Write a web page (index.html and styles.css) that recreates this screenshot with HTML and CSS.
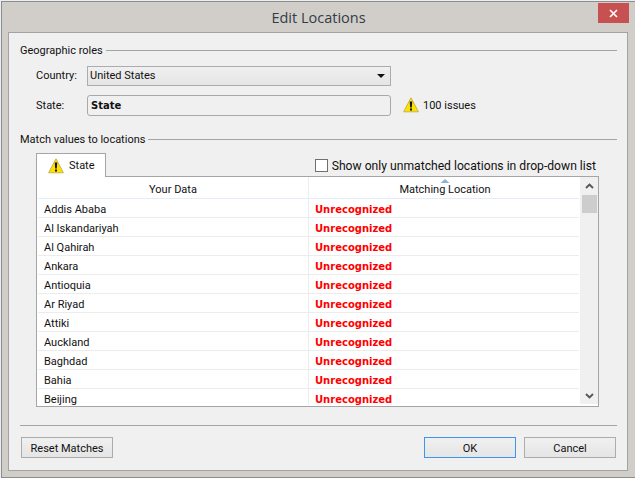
FILE: index.html
```html
<!DOCTYPE html>
<html lang="en">
<head>
<meta charset="utf-8">
<title>Edit Locations</title>
<link rel="stylesheet" href="styles.css">
</head>
<body>
<svg class="defs" width="0" height="0" aria-hidden="true">
  <symbol id="warn" viewBox="0 0 16 16">
    <path d="M8 .8 L15.4 14.8 H.6 Z" fill="#ffe100" stroke="#c9b24a" stroke-width="1" stroke-linejoin="round"/>
    <path d="M6.8 4.5h2.4l-.4 6H7.2Z" fill="#111"/>
    <rect x="7" y="11.5" width="2" height="2" fill="#111"/>
  </symbol>
</svg>
<div class="window">
  <div class="titlebar">
    <span class="title">Edit Locations</span>
    <span class="close"><svg width="9" height="9" viewBox="0 0 9 9"><path d="M1 1l7 7M8 1L1 8" stroke="#fff" stroke-width="1.6"/></svg></span>
  </div>
  <div class="panel">
    <div class="legend legend-first"><span>Geographic roles</span><i></i></div>
    <div class="field field-country">
      <label class="field-label">Country:</label>
      <div class="combo"><span>United States</span><b class="caret"></b></div>
    </div>
    <div class="field field-state">
      <label class="field-label">State:</label>
      <div class="statebox">State</div>
      <svg class="warn-icon"><use href="#warn"/></svg>
      <span class="issues">100 issues</span>
    </div>
    <div class="legend legend-match"><span>Match values to locations</span><i></i></div>
    <div class="tabline">
      <div class="tab"><svg class="warn-icon"><use href="#warn"/></svg><span>State</span></div>
      <label class="check"><span class="box"></span><span>Show only unmatched locations in drop-down list</span></label>
    </div>
    <div class="table">
      <div class="data">
        <div class="head">
          <div class="h1">Your Data</div>
          <div class="h2"><svg class="sort" width="9" height="4" viewBox="0 0 9 4"><path d="M4.5 0L9 4H0Z" fill="#8db4cf"/></svg>Matching Location</div>
        </div>
        <div class="rows">
          <div class="row"><div class="c1">Addis Ababa</div><div class="c2">Unrecognized</div></div>
          <div class="row"><div class="c1">Al Iskandariyah</div><div class="c2">Unrecognized</div></div>
          <div class="row"><div class="c1">Al Qahirah</div><div class="c2">Unrecognized</div></div>
          <div class="row"><div class="c1">Ankara</div><div class="c2">Unrecognized</div></div>
          <div class="row"><div class="c1">Antioquia</div><div class="c2">Unrecognized</div></div>
          <div class="row"><div class="c1">Ar Riyad</div><div class="c2">Unrecognized</div></div>
          <div class="row"><div class="c1">Attiki</div><div class="c2">Unrecognized</div></div>
          <div class="row"><div class="c1">Auckland</div><div class="c2">Unrecognized</div></div>
          <div class="row"><div class="c1">Baghdad</div><div class="c2">Unrecognized</div></div>
          <div class="row"><div class="c1">Bahia</div><div class="c2">Unrecognized</div></div>
          <div class="row"><div class="c1">Beijing</div><div class="c2">Unrecognized</div></div>
        </div>
      </div>
      <div class="scrollbar">
        <svg width="9" height="6" viewBox="0 0 9 6"><path d="M1 5l3.5-3.5L8 5" fill="none" stroke="#555" stroke-width="1.8"/></svg>
        <div class="thumb"></div>
        <div class="spacer"></div>
        <svg width="9" height="6" viewBox="0 0 9 6"><path d="M1 1l3.5 3.5L8 1" fill="none" stroke="#555" stroke-width="1.8"/></svg>
      </div>
    </div>
    <div class="sep"></div>
    <div class="buttons">
      <div class="btn">Reset Matches</div>
      <div class="right">
        <div class="btn btn-default">OK</div>
        <div class="btn">Cancel</div>
      </div>
    </div>
  </div>
</div>
</body>
</html>
```
FILE: styles.css
```css
* { box-sizing: border-box; }
html, body { margin: 0; padding: 0; }
body {
  width: 635px;
  height: 478px;
  overflow: hidden;
  background: #eceff2;
  font-family: Roboto, "Open Sans", sans-serif;
  font-size: 11px;
  color: #111;
}
.defs { position: absolute; }
.window {
  width: 635px;
  height: 477px;
  margin-top: 1px;
  margin-left: 1px;
  border: 1px solid #8c8c8c;
  border-right: 0;
  background: #d1cdc9;
  padding: 0 6px 7px 6px;
}
.titlebar {
  height: 30px;
  display: flex;
  align-items: center;
  justify-content: center;
  position: relative;
  padding-right: 1px;
}
.title { font-family: "Open Sans", sans-serif; font-size: 14.5px; color: #333d47; }
.close {
  position: absolute;
  right: 1px;
  top: 1px;
  width: 31px;
  height: 20px;
  background: #c75050;
  display: flex;
  align-items: center;
  justify-content: center;
}
.panel {
  width: 620px;
  height: 439px;
  border: 1px solid #a3a3a3;
  background: #f0f0f0;
  padding: 0 10px 0 11px;
}
.legend { display: flex; align-items: center; gap: 3px; height: 16px; }
.legend i { flex: 1; height: 1px; background: #a5a5a5; }
.legend-first { margin-top: 9px; }
.legend-match { margin-top: 15px; }
.field { display: flex; align-items: center; padding-left: 16px; }
.field-country { height: 21px; margin-top: 7px; }
.field-state { height: 22px; margin-top: 8px; }
.field-label { width: 51px; }
.combo {
  width: 304px;
  height: 20px;
  border: 1px solid #acacac;
  background: linear-gradient(#f0f0f0, #e5e5e5);
  display: flex;
  align-items: center;
  justify-content: space-between;
  padding: 0 5px 0 2px;
}
.caret {
  width: 0;
  height: 0;
  border-left: 4px solid transparent;
  border-right: 4px solid transparent;
  border-top: 4px solid #111;
}
.statebox {
  width: 304px;
  height: 21px;
  border: 1px solid #a9a9a9;
  border-radius: 3px;
  background: #f0f0f0;
  font-family: "DejaVu Sans", sans-serif;
  font-size: 10px;
  font-weight: 700;
  line-height: 19px;
  padding-left: 3px;
}
.warn-icon { width: 16px; height: 16px; flex: none; }
.field-state .warn-icon { margin-left: 12px; }
.issues { margin-left: 4px; }
.tabline {
  display: flex;
  justify-content: space-between;
  align-items: flex-end;
  margin-left: 16px;
  margin-top: 6px;
  height: 23px;
  width: 560px;
}
.tab {
  width: 70px;
  height: 24px;
  margin-bottom: -1px;
  border: 1px solid #a5a5a5;
  border-bottom: 0;
  background: #fff;
  display: flex;
  align-items: center;
  gap: 5px;
  padding-left: 11px;
  position: relative;
  z-index: 1;
}
.check { display: flex; align-items: center; gap: 4px; height: 20px; padding-bottom: 1px; font-size: 12.15px; }
.box { width: 13px; height: 13px; border: 1px solid #707070; background: #fff; flex: none; }
.table {
  margin-left: 16px;
  width: 563px;
  height: 231px;
  border: 1px solid #a5a5a5;
  background: #fff;
  display: flex;
  padding: 0 0 1px 1px;
}
.data { width: 543px; overflow: hidden; }
.head {
  display: grid;
  grid-template-columns: 271px 272px;
  height: 22px;
  border-bottom: 1px solid #e3ecf7;
  background: #fff;
}
.h1, .h2 { text-align: center; line-height: 25px; position: relative; }
.h1 { border-right: 1px solid #e8eef5; }
.sort { position: absolute; left: 50%; top: 2px; transform: translateX(-50%); }
.rows { height: 207px; overflow: hidden; }
.row {
  display: grid;
  grid-template-columns: 271px 272px;
  grid-template-rows: 18px;
  height: 19px;
  border-bottom: 1px solid #ececec;
  line-height: 22px;
}
.c1 { padding-left: 6px; border-right: 1px solid #ececec; }
.c2 { padding-left: 6px; color: #f00; font-weight: 700; font-family: "DejaVu Sans", sans-serif; font-size: 10px; line-height: 22px; }
.scrollbar {
  width: 18px;
  margin-left: 1px;
  margin-bottom: 1px;
  background: #f0f0f0;
  display: flex;
  flex-direction: column;
  align-items: center;
  padding-top: 6px;
  padding-bottom: 5px;
}
.thumb { width: 15px; height: 18px; background: #cdcdcd; margin-top: 6px; }
.spacer { flex: 1; }
.sep { height: 1px; background: #a5a5a5; margin-top: 18px; }
.buttons { display: flex; justify-content: space-between; margin-top: 11px; padding: 0 1px; }
.right { display: flex; gap: 8px; }
.btn {
  width: 92px;
  height: 21px;
  border: 1px solid #acacac;
  background: linear-gradient(#f0f0f0, #e5e5e5);
  text-align: center;
  line-height: 21px;
}
.btn-default { border-color: #3c96f0; }
```
